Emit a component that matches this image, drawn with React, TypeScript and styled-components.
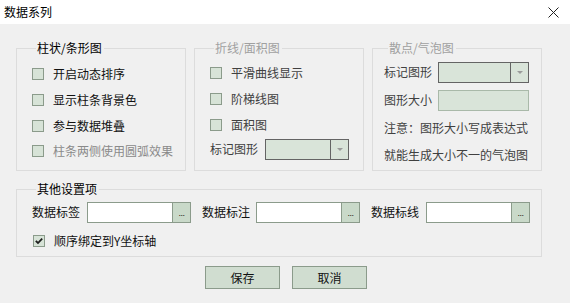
import React from "react";
import styled, { createGlobalStyle } from "styled-components";

const Global = createGlobalStyle`
  html, body { margin: 0; padding: 0; background: #f0f0f0; }
  * { box-sizing: border-box; }
`;

const Window = styled.div`
  width: 570px;
  height: 303px;
  background: #f0f0f0;
  font-family: "Noto Sans CJK SC", "Noto Sans", sans-serif;
  font-size: 12px;
  color: #111;
  overflow: hidden;
`;

const TitleBar = styled.div`
  height: 24px;
  background: #ffffff;
  display: flex;
  align-items: center;
  justify-content: space-between;
  padding: 0 11px 0 4px;
  line-height: 14px;
`;

const Title = styled.span`
  color: #000;
`;

const CloseButton = styled.div`
  width: 12px;
  height: 12px;
  display: flex;
  align-items: center;
  justify-content: center;
`;

const Body = styled.div`
  padding: 17px 0 0 16px;
  display: flex;
  flex-direction: column;
`;

const GroupRow = styled.div`
  display: flex;
  gap: 8px;
  align-items: stretch;
`;

const Group = styled.fieldset<{ $w: number; $pt: number; $pl: number; $pb?: number }>`
  margin: 0;
  min-width: 0;
  width: ${(p) => p.$w}px;
  border: 1px solid #dcdcdc;
  padding: ${(p) => p.$pt}px 4px ${(p) => p.$pb ?? 0}px ${(p) => p.$pl}px;
  display: flex;
  flex-direction: column;
`;

const Legend = styled.legend<{ $disabled?: boolean }>`
  margin-left: 4px;
  padding: 0 2px 0 1px;
  line-height: 14px;
  color: ${(p) => (p.$disabled ? "#a0a0a0" : "#000")};
`;

const Row = styled.div<{ $h: number; $pl?: number; $mt?: number }>`
  height: ${(p) => p.$h}px;
  display: flex;
  align-items: center;
  padding-left: ${(p) => p.$pl ?? 0}px;
  margin-top: ${(p) => p.$mt ?? 0}px;
  white-space: nowrap;
`;

const Box = styled.span`
  width: 12px;
  height: 12px;
  border: 1px solid #8b9b8b;
  background: #d7e3d7;
  display: inline-flex;
  align-items: center;
  justify-content: center;
  margin-right: 9px;
  flex: none;
`;

const Label = styled.span<{ $tone?: "normal" | "dim" | "disabled"; $gap?: number }>`
  line-height: 14px;
  margin-right: ${(p) => p.$gap ?? 0}px;
  color: ${(p) =>
    p.$tone === "disabled" ? "#8a8a8a" : p.$tone === "dim" ? "#404040" : "#111"};
`;

const Combo = styled.div<{ $w: number }>`
  width: ${(p) => p.$w}px;
  height: 21px;
  border: 1px solid #646464;
  background: #d9e4d9;
  display: flex;
  justify-content: flex-end;
`;

const ComboArrow = styled.div`
  width: 18px;
  border-left: 1px solid #646464;
  display: flex;
  align-items: center;
  justify-content: center;
`;

const Triangle = styled.span`
  width: 0;
  height: 0;
  border-left: 3px solid transparent;
  border-right: 3px solid transparent;
  border-top: 3px solid #9a9a9a;
`;

const SizeInput = styled.div<{ $w: number }>`
  width: ${(p) => p.$w}px;
  height: 21px;
  border: 1px solid #a9b9a9;
  background: #d9e4d9;
`;

const PathInput = styled.div<{ $gap?: number }>`
  width: 104px;
  height: 21px;
  border: 1px solid #8b9b8b;
  background: #ffffff;
  display: flex;
  justify-content: flex-end;
  margin-right: ${(p) => p.$gap ?? 0}px;
`;

const DotsButton = styled.div`
  width: 18px;
  border-left: 1px solid #8b9b8b;
  background: #c9d9c9;
  font-size: 9px;
  line-height: 1;
  color: #111;
  display: flex;
  align-items: flex-end;
  justify-content: center;
  padding-bottom: 4px;
  letter-spacing: -0.5px;
  font-family: "Liberation Sans", sans-serif;
`;

const OtherGroup = styled(Group)`
  margin-top: 11px;
`;

const ButtonRow = styled.div`
  display: flex;
  justify-content: center;
  gap: 12px;
  margin-top: 9px;
  padding-right: 14px;
`;

const Button = styled.div`
  width: 75px;
  height: 23px;
  border: 1px solid #8b9b8b;
  background: #d0ddd0;
  display: flex;
  align-items: center;
  justify-content: center;
  line-height: 14px;
  color: #111;
`;

const Check = ({ checked }: { checked?: boolean }) => (
  <Box>
    {checked && (
      <svg width="8" height="8" viewBox="0 0 8 8">
        <path d="M0.8 3.8 L3 6 L7.2 1.6" stroke="#1e1e1e" strokeWidth="1.8" fill="none" />
      </svg>
    )}
  </Box>
);

const Dropdown = ({ w }: { w: number }) => (
  <Combo $w={w}>
    <ComboArrow>
      <Triangle />
    </ComboArrow>
  </Combo>
);

export default function App() {
  return (
    <Window>
      <Global />
      <TitleBar>
        <Title>数据系列</Title>
        <CloseButton>
          <svg width="11" height="11" viewBox="0 0 11 11">
            <path d="M0.5 0.5 L10.5 10.5 M10.5 0.5 L0.5 10.5" stroke="#222" strokeWidth="1" />
          </svg>
        </CloseButton>
      </TitleBar>
      <Body>
        <GroupRow>
          <Group $w={170} $pt={6} $pl={15} $pb={6}>
            <Legend>柱状/条形图</Legend>
            <Row $h={26}>
              <Check />
              <Label>开启动态排序</Label>
            </Row>
            <Row $h={26}>
              <Check />
              <Label>显示柱条背景色</Label>
            </Row>
            <Row $h={25}>
              <Check />
              <Label>参与数据堆叠</Label>
            </Row>
            <Row $h={26}>
              <Check />
              <Label $tone="disabled">柱条两侧使用圆弧效果</Label>
            </Row>
          </Group>
          <Group $w={170} $pt={5} $pl={15}>
            <Legend $disabled>折线/面积图</Legend>
            <Row $h={26}>
              <Check />
              <Label $tone="dim">平滑曲线显示</Label>
            </Row>
            <Row $h={26}>
              <Check />
              <Label $tone="dim">阶梯线图</Label>
            </Row>
            <Row $h={26}>
              <Check />
              <Label $tone="dim">面积图</Label>
            </Row>
            <Row $h={22} $pl={0} $mt={0}>
              <Label $tone="dim" $gap={7}>标记图形</Label>
              <Dropdown w={84} />
            </Row>
          </Group>
          <Group $w={170} $pt={3} $pl={11}>
            <Legend $disabled>散点/气泡图</Legend>
            <Row $h={28}>
              <Label $tone="dim" $gap={6}>标记图形</Label>
              <Dropdown w={91} />
            </Row>
            <Row $h={28}>
              <Label $tone="dim" $gap={6}>图形大小</Label>
              <SizeInput $w={91} />
            </Row>
            <Row $h={28}>
              <Label $tone="dim">注意：图形大小写成表达式</Label>
            </Row>
            <Row $h={26}>
              <Label $tone="dim">就能生成大小不一的气泡图</Label>
            </Row>
          </Group>
        </GroupRow>
        <OtherGroup $w={526} $pt={3} $pl={15} $pb={2}>
          <Legend>其他设置项</Legend>
          <Row $h={26}>
            <Label $gap={7}>数据标签</Label>
            <PathInput $gap={11}>
              <DotsButton>...</DotsButton>
            </PathInput>
            <Label $gap={6}>数据标注</Label>
            <PathInput $gap={11}>
              <DotsButton>...</DotsButton>
            </PathInput>
            <Label $gap={7}>数据标线</Label>
            <PathInput>
              <DotsButton>...</DotsButton>
            </PathInput>
          </Row>
          <Row $h={26} $mt={3} $pl={1}>
            <Check checked />
            <Label>顺序绑定到Y坐标轴</Label>
          </Row>
        </OtherGroup>
        <ButtonRow>
          <Button>保存</Button>
          <Button>取消</Button>
        </ButtonRow>
      </Body>
    </Window>
  );
}
